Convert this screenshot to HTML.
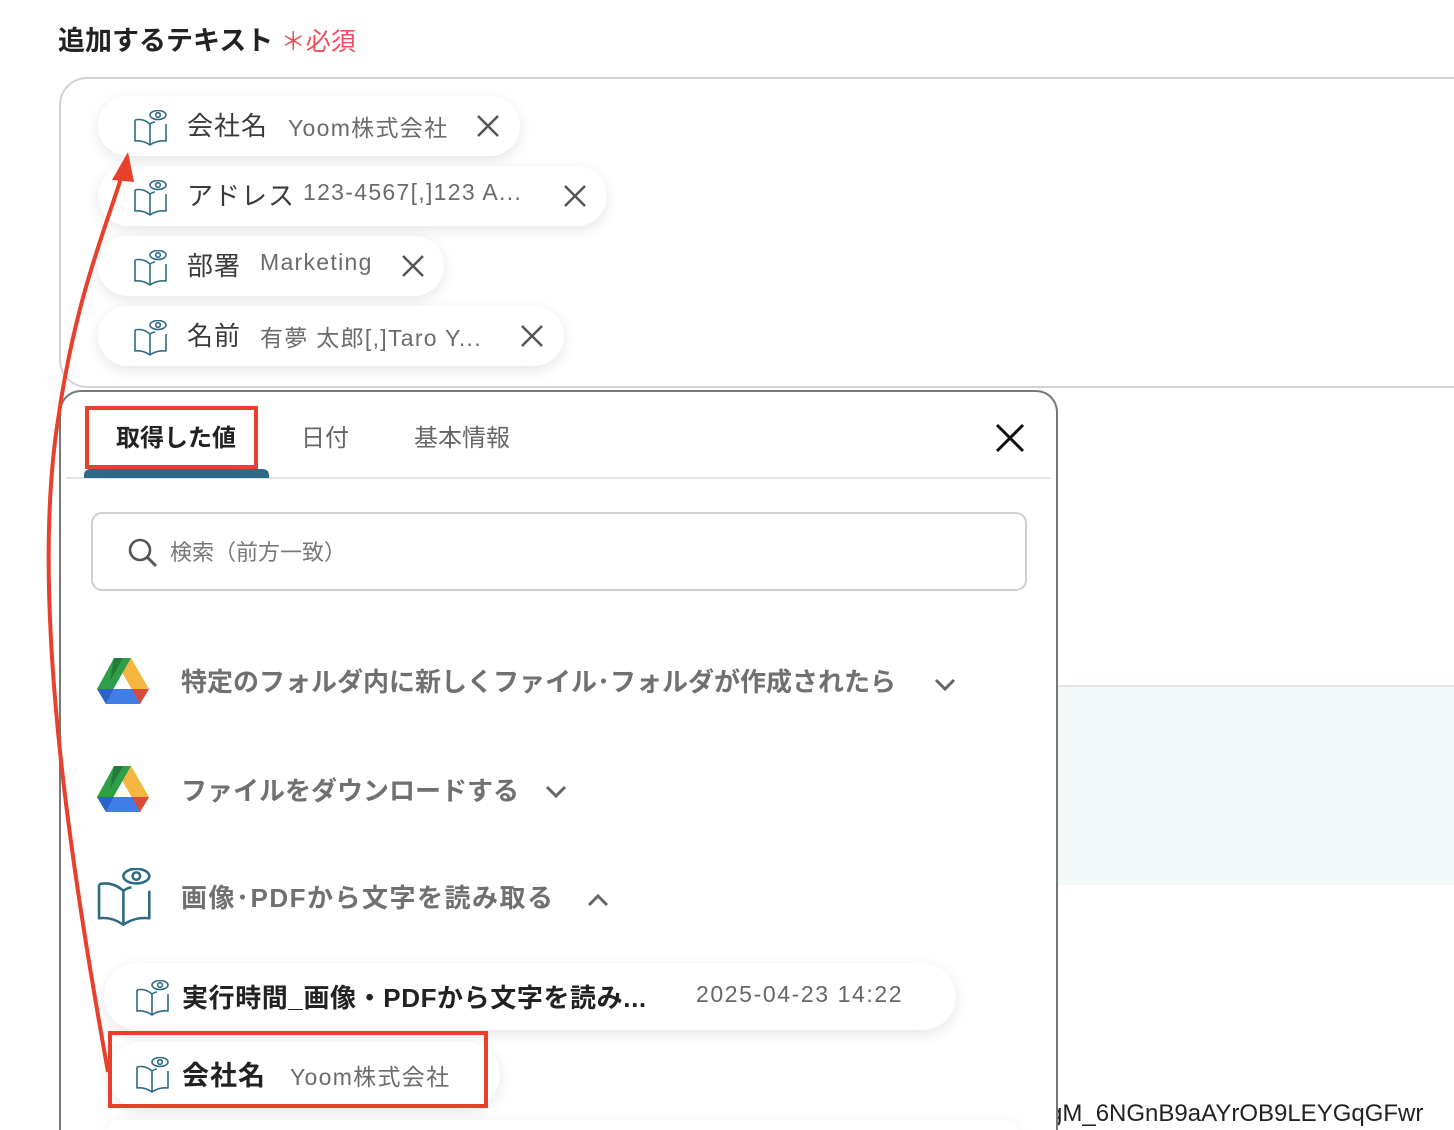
<!DOCTYPE html>
<html style="width:1454px;height:1130px;overflow:hidden"><head><meta charset="utf-8"><style>
*{margin:0;padding:0;box-sizing:border-box}
body{width:1454px;height:1130px;overflow:hidden;background:#fff;position:relative;font-family:"Liberation Sans","Noto Sans CJK JP",sans-serif}
.a{position:absolute}
.chip{position:absolute;height:60px;border-radius:30px;background:#fff;box-shadow:0 4px 14px rgba(0,0,0,.10);white-space:nowrap}
.chip svg.b{position:absolute;left:36px;top:14px}
.lab{position:absolute;left:89px;top:10px;font-size:26px;color:#3a3a3a;letter-spacing:1px}
.val{position:absolute;top:13px;font-size:23px;color:#6b6b6b;letter-spacing:1.3px}
.x{position:absolute;top:18px}
.gd{position:absolute}
.sec{position:absolute;left:180px;font-size:26px;color:#707070;font-weight:bold}
</style></head><body>
<svg width="0" height="0" style="position:absolute"><defs>
<g id="bk" fill="none" stroke="#2f6b84" stroke-width="1.6" stroke-linejoin="round"><path d="M1 10 Q9 8 16 14 V35 M1 10 V31 Q9 30 16 35 Q23 30 32 31 V14 M16 14 Q19 12 21 12"/><ellipse cx="24" cy="5" rx="8" ry="4.5"/><circle cx="24" cy="5" r="2.3"/></g>
<g id="gdr"><path d="M17 0 L34 0 L52 31 L43 46 Z" fill="#f4b63f"/><path d="M17 0 L34 0 L17 30 L9 46 L0 31 Z" fill="#2f9e48"/><path d="M17 0 L26 0 L13 23 Z" fill="#237a3c"/><path d="M9 46 L17 31 L52 31 L43 46 Z" fill="#3f7de9"/><path d="M0 31 L17 31 L9 46 Z" fill="#2a62c9"/><path d="M43 46 L35 31 L52 31 Z" fill="#da4b3b"/></g>
</defs></svg>

<div class="a" style="left:58px;top:19px;font-size:27px;color:#222;font-weight:bold">追加するテキスト <span style="color:#e8505b;font-weight:normal;font-size:25px">＊必須</span></div>

<div class="a" style="left:59px;top:77px;width:1395px;height:311px;border:2px solid #cfd3d8;border-right:none;border-radius:28px 0 0 28px"></div>

<div class="chip" style="left:98px;top:96px;width:422px"><svg class="b" width="34" height="37"><use href="#bk"/></svg><span class="lab">会社名</span><span class="val" style="left:190px">Yoom株式会社</span><svg class="x" style="left:378px" width="24" height="24"><path d="M2 2L22 22M22 2L2 22" stroke="#555" stroke-width="2.5"/></svg></div>
<div class="chip" style="left:98px;top:166px;width:509px"><svg class="b" width="34" height="37"><use href="#bk"/></svg><span class="lab">アドレス</span><span class="val" style="left:205px">123-4567[,]123 A...</span><svg class="x" style="left:465px" width="24" height="24"><path d="M2 2L22 22M22 2L2 22" stroke="#555" stroke-width="2.5"/></svg></div>
<div class="chip" style="left:98px;top:236px;width:346px"><svg class="b" width="34" height="37"><use href="#bk"/></svg><span class="lab">部署</span><span class="val" style="left:162px">Marketing</span><svg class="x" style="left:303px" width="24" height="24"><path d="M2 2L22 22M22 2L2 22" stroke="#555" stroke-width="2.5"/></svg></div>
<div class="chip" style="left:98px;top:306px;width:466px"><svg class="b" width="34" height="37"><use href="#bk"/></svg><span class="lab">名前</span><span class="val" style="left:162px">有夢 太郎[,]Taro Y...</span><svg class="x" style="left:422px" width="24" height="24"><path d="M2 2L22 22M22 2L2 22" stroke="#555" stroke-width="2.5"/></svg></div>

<div class="a" style="left:1057px;top:685px;width:397px;height:200px;background:#f3f8f8;border-top:2px solid #e3e6e9"></div>
<div class="a" style="left:1049px;top:1100px;font-size:24px;line-height:28px;color:#222;white-space:nowrap;width:405px;overflow:hidden">gM_6NGnB9aAYrOB9LEYGqGFwr</div>

<div class="a" style="left:59px;top:390px;width:999px;height:740px;border:2px solid #777;border-bottom:none;border-radius:22px 22px 0 0;background:#fff;overflow:hidden">
 <div class="a" style="left:55px;top:26px;font-size:24px;font-weight:bold;color:#222">取得した値</div>
 <div class="a" style="left:240px;top:26px;font-size:24px;color:#666">日付</div>
 <div class="a" style="left:353px;top:26px;font-size:24px;color:#666">基本情報</div>
 <svg class="a" style="left:934px;top:31px" width="30" height="30"><path d="M2 2L28 28M28 2L2 28" stroke="#111" stroke-width="3"/></svg>
 <div class="a" style="left:5px;top:85px;width:985px;height:2px;background:#e4e4e4"></div>
 <div class="a" style="left:23px;top:77px;width:185px;height:9px;background:#2d6a85;border-radius:6px 6px 0 0"></div>
 <div class="a" style="left:30px;top:120px;width:936px;height:79px;border:2px solid #cfcfcf;border-radius:11px"></div>
 <svg class="a" style="left:66px;top:145px" width="32" height="32"><circle cx="13" cy="13" r="10" fill="none" stroke="#555" stroke-width="2.6"/><path d="M20.5 20.5L29 29" stroke="#555" stroke-width="3"/></svg>
 <div class="a" style="left:109px;top:143px;font-size:22px;color:#777">検索（前方一致）</div>

 <svg class="gd" style="left:36px;top:266px" width="53" height="47"><use href="#gdr"/></svg>
 <div class="sec" style="left:120px;top:270px">特定のフォルダ内に新しくファイル･フォルダが作成されたら</div>
 <svg class="a" style="left:872px;top:285px" width="24" height="16"><path d="M3 3L12 12L21 3" fill="none" stroke="#666" stroke-width="3"/></svg>
 <svg class="gd" style="left:36px;top:374px" width="53" height="47"><use href="#gdr"/></svg>
 <div class="sec" style="left:120px;top:379px">ファイルをダウンロードする</div>
 <svg class="a" style="left:483px;top:392px" width="24" height="16"><path d="M3 3L12 12L21 3" fill="none" stroke="#666" stroke-width="3"/></svg>
 <svg class="a" style="left:36px;top:476px" width="56" height="60" viewBox="0 0 34 37"><use href="#bk"/></svg>
 <div class="sec" style="left:120px;top:486px;letter-spacing:1.5px">画像･PDFから文字を読み取る</div>
 <svg class="a" style="left:525px;top:500px" width="24" height="16"><path d="M3 13L12 4L21 13" fill="none" stroke="#666" stroke-width="3"/></svg>
</div>

<div class="chip" style="left:104px;top:963px;width:852px;height:67px;border-radius:34px"><svg class="a" style="left:32px;top:17px" width="34" height="37"><use href="#bk"/></svg><span class="a" style="left:78px;top:15px;font-size:26px;font-weight:bold;color:#222;letter-spacing:.6px">実行時間_画像・PDFから文字を読み...</span><span class="a" style="left:592px;top:18px;font-size:23px;color:#666;letter-spacing:1.6px">2025-04-23 14:22</span></div>
<div class="chip" style="left:108px;top:1042px;width:392px;height:66px;border-radius:33px"><svg class="a" style="left:28px;top:15px" width="34" height="37"><use href="#bk"/></svg><span class="a" style="left:74px;top:12px;font-size:27px;font-weight:bold;color:#222;letter-spacing:1px">会社名</span><span class="a" style="left:182px;top:16px;font-size:23px;color:#6b6b6b;letter-spacing:1.3px">Yoom株式会社</span></div>
<div class="chip" style="left:108px;top:1120px;width:910px;height:10px;border-radius:30px 30px 0 0"></div>

<div class="a" style="left:85px;top:406px;width:173px;height:63px;border:4px solid #e8402a"></div>
<div class="a" style="left:108px;top:1031px;width:380px;height:77px;border:4px solid #e8402a"></div>
<svg class="a" style="left:0;top:0" width="300" height="1130"><path d="M108 1072 C70 860 30 600 58 420 C75 300 105 230 122 175" fill="none" stroke="#e8402a" stroke-width="4"/><path d="M128 152 L112 180 L134 182 Z" fill="#e8402a"/></svg>
</body></html>
